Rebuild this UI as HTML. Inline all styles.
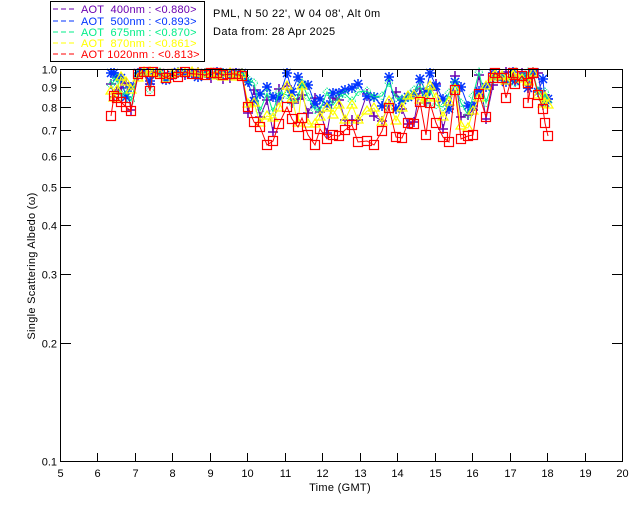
<!DOCTYPE html>
<html><head><meta charset="utf-8"><style>
html,body{margin:0;padding:0;background:#fff;}
svg{display:block;font-family:"Liberation Sans",sans-serif;}
text{white-space:pre;}
</style></head><body>
<svg id="s" width="640" height="512" viewBox="0 0 640 512" xmlns="http://www.w3.org/2000/svg" xml:space="preserve">
<rect x="0" y="0" width="640" height="512" fill="#fff"/>
<g id="data"></g>
<rect x="60.5" y="69.5" width="562" height="392" fill="none" stroke="#000" stroke-width="1"/>
<g id="ticks" stroke="#000" stroke-width="1"></g>
<rect x="50.5" y="1.5" width="154" height="60" fill="#fff" stroke="#000"/>
<g font-size="11" letter-spacing="0.2">
<line x1="53" y1="9" x2="76" y2="9" stroke="#6a00b0" stroke-dasharray="5,3"/>
<text x="81" y="13" fill="#6a00b0">AOT  400nm : &lt;0.880&gt;</text>
<line x1="53" y1="21" x2="76" y2="21" stroke="#0033ff" stroke-dasharray="5,3"/>
<text x="81" y="25" fill="#0033ff">AOT  500nm : &lt;0.893&gt;</text>
<line x1="53" y1="32" x2="76" y2="32" stroke="#00ee88" stroke-dasharray="5,3"/>
<text x="81" y="36" fill="#00ee88">AOT  675nm : &lt;0.870&gt;</text>
<line x1="53" y1="43" x2="76" y2="43" stroke="#ffff00" stroke-dasharray="5,3"/>
<text x="81" y="47" fill="#ffff00">AOT  870nm : &lt;0.861&gt;</text>
<line x1="53" y1="54" x2="76" y2="54" stroke="#ff0000" stroke-dasharray="5,3"/>
<text x="81" y="58" fill="#ff0000">AOT 1020nm : &lt;0.813&gt;</text>
</g>
<g font-size="11" letter-spacing="0.4">
<text x="213" y="17" fill="#000">PML, N 50 22', W 04 08', Alt 0m</text>
<text x="213" y="35" fill="#000">Data from: 28 Apr 2025</text>
</g>
<g font-size="11" fill="#000" text-anchor="end" id="ylab"></g>
<g font-size="11" fill="#000" text-anchor="middle" id="xlab"></g>
<text x="340" y="491" font-size="11" text-anchor="middle" letter-spacing="0.3">Time (GMT)</text>
<text transform="translate(35,266) rotate(-90)" font-size="11" text-anchor="middle" letter-spacing="0.3">Single Scattering Albedo (ω)</text>
</svg>
<script>
var NS="http://www.w3.org/2000/svg";
function el(t,a,p){var e=document.createElementNS(NS,t);for(var k in a)e.setAttribute(k,a[k]);p.appendChild(e);return e;}
var Y=function(v){return 69+(-Math.log10(v))*392;};
var tk=document.getElementById('ticks'),yl=document.getElementById('ylab'),xl=document.getElementById('xlab');
for(var i=1;i<=10;i++){var v=i/10,y=Math.round(Y(v))+0.5;
el('line',{x1:60,y1:y,x2:71,y2:y},tk);el('line',{x1:612,y1:y,x2:622,y2:y},tk);
var t=el('text',{x:57,y:y+4},yl);t.textContent=v.toFixed(1);}
for(var h=5;h<=20;h++){var x=Math.round(60+(h-5)*37.47)+0.5;
if(h>5&&h<20){el('line',{x1:x,y1:461,x2:x,y2:453},tk);el('line',{x1:x,y1:69,x2:x,y2:77},tk);}
var t=el('text',{x:x,y:477},xl);t.textContent=h;}
var red=[[111,116],[114,96],[117,98],[121,102],[126,107],[131,111],[138,74],[144,72],[150,91],[153,72],[160,74],[166,78],[172,74],[178,77],[185,72],[192,74],[198,74],[205,75],[211,73],[217,73],[223,75],[230,74],[236,74],[242,76],[248,107],[254,122],[260,127],[267,145],[273,141],[279,124],[287,107],[292,119],[298,127],[302,118],[308,135],[315,145],[320,129],[327,139],[333,135],[339,136],[345,130],[352,125],[358,142],[367,141],[374,145],[382,131],[389,108],[396,137],[402,138],[408,123],[414,124],[420,102],[426,135],[430,103],[436,123],[443,137],[449,142],[455,90],[461,139],[468,136],[473,135],[479,94],[486,117],[493,78],[495,73],[502,78],[506,98],[513,73],[515,84],[522,76],[528,83],[528,103],[533,73],[538,95],[543,109],[545,123],[548,136]];
function noise(i,s){var v=Math.sin(i*12.9898+s*78.233)*43758.5453;return v-Math.floor(v)-0.5;}
var ser=[
{c:'#6a00b0',f:0.6,n:45,s:1,m:'plus'},
{c:'#0033ff',f:0.35,n:30,s:2,m:'star'},
{c:'#00ee88',f:0.45,n:28,s:3,m:'dia'},
{c:'#ffff00',f:0.65,n:32,s:4,m:'tri'}];
var g=document.getElementById('data');
function draw(pts,c,m){
el('polyline',{points:pts.map(function(p){return p.join(',')}).join(' '),fill:'none',stroke:c,'stroke-width':1},g);
pts.forEach(function(p){var x=p[0],y=p[1];
if(m=='sq')el('rect',{x:x-4.5,y:y-4.5,width:9,height:9,fill:'none',stroke:c,'stroke-width':1.2},g);
else if(m=='plus')el('path',{d:'M'+(x-5)+' '+y+'h10M'+x+' '+(y-5)+'v10',stroke:c,'stroke-width':1.5},g);
else if(m=='star')el('path',{d:'M'+(x-5)+' '+y+'h10M'+x+' '+(y-5)+'v10M'+(x-4)+' '+(y-4)+'l8 8M'+(x+4)+' '+(y-4)+'l-8 8',stroke:c,'stroke-width':1.5},g);
else if(m=='dia')el('path',{d:'M'+x+' '+(y-4)+'l4 4l-4 4l-4 -4z',fill:'none',stroke:c,'stroke-width':1,'stroke-dasharray':'1,1'},g);
else if(m=='tri')el('path',{d:'M'+x+' '+(y-5)+'l5 8h-10z',fill:'none',stroke:c,'stroke-width':1.2},g);
});}
ser.forEach(function(s){
var pts=red.map(function(p,i){var d=p[1]-72;var y=72+d*s.f+noise(i,s.s)*s.n*Math.min(1,d/25+0.2);if(y<72)y=72+Math.abs(noise(i,s.s+5))*3;return [p[0],Math.round(y)];});
draw(pts,s.c,s.m);});
draw(red,'#ff0000','sq');
</script>
</body></html>
